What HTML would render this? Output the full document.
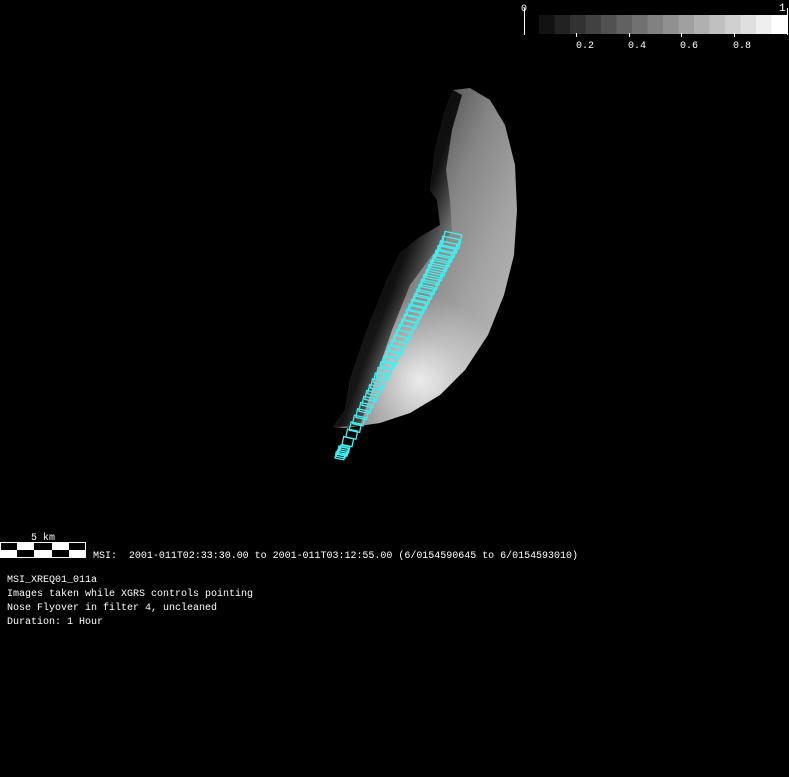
<!DOCTYPE html>
<html><head><style>
html,body{margin:0;padding:0;background:#000;width:789px;height:777px;overflow:hidden}
svg{display:block}
text{font-family:"Liberation Mono",monospace;font-size:10px;fill:#fff;white-space:pre}
</style></head><body>
<svg id="s" width="789" height="777" viewBox="0 0 789 777" xmlns="http://www.w3.org/2000/svg" xml:space="preserve">
<defs>
<linearGradient id="base" x1="380" y1="230" x2="520" y2="290" gradientUnits="userSpaceOnUse">
<stop offset="0" stop-color="#505050"/>
<stop offset="0.35" stop-color="#858585"/>
<stop offset="0.7" stop-color="#a2a2a2"/>
<stop offset="1" stop-color="#b4b4b4"/>
</linearGradient>
<radialGradient id="hi" cx="420" cy="380" r="85" gradientUnits="userSpaceOnUse">
<stop offset="0" stop-color="#fff" stop-opacity="0.8"/>
<stop offset="0.5" stop-color="#fff" stop-opacity="0.35"/>
<stop offset="1" stop-color="#fff" stop-opacity="0"/>
</radialGradient>
<linearGradient id="sh" x1="380" y1="320" x2="420" y2="335" gradientUnits="userSpaceOnUse">
<stop offset="0" stop-color="#000" stop-opacity="0.85"/>
<stop offset="1" stop-color="#000" stop-opacity="0"/>
</linearGradient>
</defs>
<path d="M453,90 L470,88 L490,100 L505,125 L515,165 L517,210 L514,255 L504,295 L488,335 L465,370 L440,395 L410,413 L380,423 L345,428 L333,427 L345,410 L350,380 L367,330 L387,280 L400,253 L420,237 L440,225 L437,200 L430,190 L435,150 L445,110 Z" fill="url(#base)"/>
<path d="M453,90 L470,88 L490,100 L505,125 L515,165 L517,210 L514,255 L504,295 L488,335 L465,370 L440,395 L410,413 L380,423 L345,428 L333,427 L345,410 L350,380 L367,330 L387,280 L400,253 L420,237 L440,225 L437,200 L430,190 L435,150 L445,110 Z" fill="url(#hi)"/>
<path d="M453,90 L445,110 L435,150 L430,190 L437,200 L440,225 L420,237 L400,253 L387,280 L367,330 L350,380 L345,410 L333,427 L360,426 L375,380 L392,330 L410,285 L430,258 L452,232 L450,200 L446,170 L452,130 L462,95 Z" fill="url(#sh)"/>
<g id="fp" fill="none" stroke="#44eef0" stroke-width="1.3"></g>
<g id="cb"></g>
<line x1="524.5" y1="8" x2="524.5" y2="35" stroke="#fff"/>
<line x1="787.5" y1="8" x2="787.5" y2="35" stroke="#fff"/>
<line x1="576.5" y1="33" x2="576.5" y2="37" stroke="#fff"/>
<line x1="629.5" y1="33" x2="629.5" y2="37" stroke="#fff"/>
<line x1="681.5" y1="33" x2="681.5" y2="37" stroke="#fff"/>
<line x1="734.5" y1="33" x2="734.5" y2="37" stroke="#fff"/>
<text x="521" y="11">0</text>
<text x="779" y="11" style="font-size:11px">1</text>
<text x="576" y="48">0.2</text>
<text x="628" y="48">0.4</text>
<text x="680" y="48">0.6</text>
<text x="733" y="48">0.8</text>
<rect x="0" y="542" width="86" height="16" fill="#fff"/>
<rect x="1" y="543" width="16" height="7" fill="#000"/>
<rect x="34" y="543" width="18" height="7" fill="#000"/>
<rect x="69" y="543" width="16" height="7" fill="#000"/>
<rect x="17" y="550" width="17" height="7" fill="#000"/>
<rect x="52" y="550" width="17" height="7" fill="#000"/>
<text x="31" y="540">5 km</text>
<text x="93" y="558" textLength="485" lengthAdjust="spacing">MSI:  2001-011T02:33:30.00 to 2001-011T03:12:55.00 (6/0154590645 to 6/0154593010)</text>
<text x="7" y="582">MSI_XREQ01_011a</text>
<text x="7" y="596">Images taken while XGRS controls pointing</text>
<text x="7" y="610">Nose Flyover in filter 4, uncleaned</text>
<text x="7" y="624">Duration: 1 Hour</text>
</svg>
<script>
var ns="http://www.w3.org/2000/svg";
var cb=document.getElementById("cb");
for(var i=0;i<16;i++){var r=document.createElementNS(ns,"rect");r.setAttribute("x",539+i*15.5);r.setAttribute("y",15);r.setAttribute("width",16);r.setAttribute("height",19);var v=Math.round(18+i*15.8);if(i==15)v=255;r.setAttribute("fill","rgb("+v+","+v+","+v+")");cb.appendChild(r);}
var fp=document.getElementById("fp");
function box(cx,cy,w,h){var p=document.createElementNS(ns,"rect");p.setAttribute("x",-w/2);p.setAttribute("y",-h/2);p.setAttribute("width",w);p.setAttribute("height",h);
p.setAttribute("transform","translate("+cx+","+cy+") rotate(12)");fp.appendChild(p);}
var N=40;
for(var i=0;i<N;i++){var t=i/(N-1);var e=Math.pow(t,0.85);
box(343+(452-343)*e, 451+(240-451)*e, 10+7*t, 8+6*t);}
for(var k=0;k<5;k++){box(340+k*1.2,456-k*1.8,9,6);}
</script>
</body></html>
